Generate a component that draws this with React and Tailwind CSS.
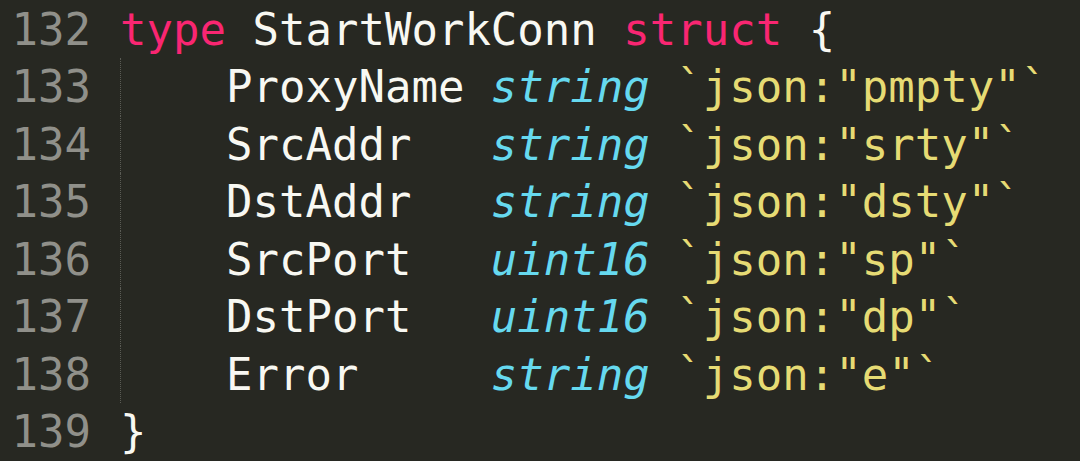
import React from "react";

const K = ({ children }) => <span className="text-[#f92672]">{children}</span>;
const T = ({ children }) => <span className="text-[#66d9ef] italic">{children}</span>;
const S = ({ children }) => <span className="text-[#e6db74]">{children}</span>;
const Indent = () => (
  <span className="inline-block w-[4ch] h-full border-l border-dotted border-[#5a5b54] align-top">&nbsp;</span>
);

const rows = [
  { n: 132, c: (<><K>type</K> StartWorkConn <K>struct</K> {"{"}</>) },
  { n: 133, c: (<><Indent />ProxyName <T>string</T> <S>`json:"pmpty"`</S></>) },
  { n: 134, c: (<><Indent />SrcAddr   <T>string</T> <S>`json:"srty"`</S></>) },
  { n: 135, c: (<><Indent />DstAddr   <T>string</T> <S>`json:"dsty"`</S></>) },
  { n: 136, c: (<><Indent />SrcPort   <T>uint16</T> <S>`json:"sp"`</S></>) },
  { n: 137, c: (<><Indent />DstPort   <T>uint16</T> <S>`json:"dp"`</S></>) },
  { n: 138, c: (<><Indent />Error     <T>string</T> <S>`json:"e"`</S></>) },
  { n: 139, c: (<>{"}"}</>) },
];

export default function App() {
  return (
    <div
      className="w-[1080px] h-[461px] bg-[#272822] overflow-hidden pt-[1px] text-[44px] leading-[57.43px] text-[#f8f8f2]"
      style={{ fontFamily: '"DejaVu Sans Mono", "Liberation Mono", monospace' }}
    >
      {rows.map((r) => (
        <div key={r.n} className="flex h-[57.43px]">
          <div className="w-[91px] text-right text-[#90908a] shrink-0">{r.n}</div>
          <div className="pl-[29px] whitespace-pre">{r.c}</div>
        </div>
      ))}
    </div>
  );
}
